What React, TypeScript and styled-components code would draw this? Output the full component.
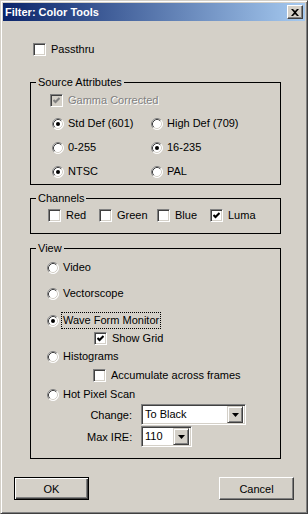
import React from 'react';
import styled, { createGlobalStyle } from 'styled-components';

const GlobalStyle = createGlobalStyle`
  html, body {
    margin: 0;
    padding: 0;
  }
  body {
    background: #d4d0c8;
    font-family: "Liberation Sans", Arial, sans-serif;
    font-size: 11px;
    color: #000;
  }
  * {
    box-sizing: border-box;
  }
`;

type Kind = 'radio' | 'check';

const Window = styled.div`
  width: 308px;
  height: 514px;
  display: flex;
  flex-direction: column;
  background: #d4d0c8;
  border: 1px solid;
  border-color: #d4d0c8 #404040 #404040 #d4d0c8;
  box-shadow: inset 1px 1px 0 #fff, inset -1px -1px 0 #808080;
  padding: 2px;
`;

const TitleBar = styled.div`
  height: 18px;
  flex: none;
  display: flex;
  align-items: center;
  justify-content: space-between;
  padding: 0 2px 0 2px;
  background: linear-gradient(to right, #0a246a, #a6caf0);
`;

const Title = styled.span`
  color: #fff;
  font-weight: bold;
  font-size: 11px;
  white-space: nowrap;
`;

const CloseButton = styled.div`
  width: 16px;
  height: 14px;
  display: flex;
  align-items: center;
  justify-content: center;
  background: #d4d0c8;
  border: 1px solid;
  border-color: #fff #404040 #404040 #fff;
  box-shadow: inset -1px -1px 0 #808080;
`;

const Body = styled.div`
  display: flex;
  flex-direction: column;
  padding: 22px 24px 0 27px;
`;

const OptionRow = styled.label<{ $kind: Kind; $indent?: number; $top?: number }>`
  display: flex;
  align-items: center;
  height: 13px;
  gap: ${p => (p.$kind === 'radio' ? 4 : 5)}px;
  margin-left: ${p => p.$indent ?? 0}px;
  margin-top: ${p => p.$top ?? 0}px;
`;

const OptionText = styled.span<{ $disabled?: boolean; $focused?: boolean }>`
  line-height: 13px;
  white-space: nowrap;
  color: ${p => (p.$disabled ? '#808080' : '#000')};
  text-shadow: ${p => (p.$disabled ? '1px 1px 0 #fff' : 'none')};
  outline: ${p => (p.$focused ? '1px dotted #000' : 'none')};
  outline-offset: 1px;
`;

const CheckBox = styled.span<{ $disabled?: boolean }>`
  width: 13px;
  height: 13px;
  flex: none;
  display: flex;
  align-items: center;
  justify-content: center;
  background: ${p => (p.$disabled ? '#d4d0c8' : '#fff')};
  border: 1px solid;
  border-color: #808080 #fff #fff #808080;
  box-shadow: inset 1px 1px 0 #404040, inset -1px -1px 0 #d4d0c8;
`;

const GroupBox = styled.fieldset<{ $top: number }>`
  margin: ${p => p.$top}px 0 0 0;
  padding: 0;
  min-width: 0;
  border: 1px solid #000;
`;

const Legend = styled.legend`
  margin-left: 5px;
  padding: 0 2px;
  line-height: 13px;
  font-size: 11px;
`;

const GroupContent = styled.div<{ $pad: string }>`
  display: flex;
  flex-direction: column;
  padding: ${p => p.$pad};
`;

const RadioGrid = styled.div`
  display: grid;
  grid-template-columns: 99px auto;
  row-gap: 11px;
  margin: 10px 0 0 2px;
`;

const ChannelGrid = styled.div`
  display: grid;
  grid-template-columns: 51px 58px 53px auto;
`;

const FieldGrid = styled.div`
  display: grid;
  grid-template-columns: 45px auto;
  column-gap: 9px;
  row-gap: 1px;
  align-items: center;
  margin: 3px 0 0 40px;
`;

const FieldLabel = styled.span`
  text-align: right;
  white-space: nowrap;
`;

const Combo = styled.div<{ $width: number }>`
  width: ${p => p.$width}px;
  height: 21px;
  display: flex;
  align-items: center;
  background: #fff;
  border: 1px solid;
  border-color: #808080 #fff #fff #808080;
  box-shadow: inset 1px 1px 0 #404040, inset -1px -1px 0 #d4d0c8;
  padding: 2px 2px 2px 3px;
`;

const ComboText = styled.span`
  flex: 1;
  line-height: 17px;
  white-space: nowrap;
`;

const ComboButton = styled.span`
  width: 16px;
  height: 17px;
  flex: none;
  display: flex;
  align-items: center;
  justify-content: center;
  background: #d4d0c8;
  border: 1px solid;
  border-color: #d4d0c8 #404040 #404040 #d4d0c8;
  box-shadow: inset 1px 1px 0 #fff, inset -1px -1px 0 #808080;
`;

const ButtonRow = styled.div`
  display: flex;
  justify-content: space-between;
  margin-top: 18px;
  padding: 0 11px;
`;

const Button = styled.button<{ $default?: boolean }>`
  width: 75px;
  height: 23px;
  padding: 0;
  font-family: "Liberation Sans", Arial, sans-serif;
  font-size: 11px;
  color: #000;
  background: #d4d0c8;
  border: 1px solid;
  border-color: ${p => (p.$default ? '#000' : '#fff #404040 #404040 #fff')};
  box-shadow: ${p =>
    p.$default
      ? 'inset 1px 1px 0 #fff, inset -1px -1px 0 #404040, inset -2px -2px 0 #808080'
      : 'inset -1px -1px 0 #808080'};
`;

const RadioMark = ({ checked }: { checked?: boolean }) => (
  <svg width="12" height="12" viewBox="0 0 12 12" style={{ flex: 'none' }}>
    <circle cx="6" cy="6" r="5.5" fill="#fff" />
    <path d="M2.11 9.89 A5.5 5.5 0 0 1 9.89 2.11" fill="none" stroke="#808080" />
    <path d="M9.89 2.11 A5.5 5.5 0 0 1 2.11 9.89" fill="none" stroke="#fff" />
    <path d="M2.82 9.18 A4.5 4.5 0 0 1 9.18 2.82" fill="none" stroke="#404040" />
    <path d="M9.18 2.82 A4.5 4.5 0 0 1 2.82 9.18" fill="none" stroke="#d4d0c8" />
    {checked && <circle cx="6" cy="6" r="2" fill="#000" />}
  </svg>
);

const CheckMark = ({ checked, disabled }: { checked?: boolean; disabled?: boolean }) => (
  <CheckBox $disabled={disabled}>
    {checked && (
      <svg width="7" height="7" viewBox="0 0 7 7">
        <polyline
          points="0.5,3 2.5,5 6.5,1"
          fill="none"
          stroke={disabled ? '#808080' : '#000'}
          strokeWidth="2"
        />
      </svg>
    )}
  </CheckBox>
);

type OptionProps = {
  kind: Kind;
  checked?: boolean;
  disabled?: boolean;
  focused?: boolean;
  indent?: number;
  top?: number;
  children: React.ReactNode;
};

const Option = ({ kind, checked, disabled, focused, indent, top, children }: OptionProps) => (
  <OptionRow $kind={kind} $indent={indent} $top={top}>
    {kind === 'radio' ? <RadioMark checked={checked} /> : <CheckMark checked={checked} disabled={disabled} />}
    <OptionText $disabled={disabled} $focused={focused}>
      {children}
    </OptionText>
  </OptionRow>
);

const Arrow = () => (
  <svg width="7" height="4" viewBox="0 0 7 4">
    <polygon points="0,0 7,0 3.5,4" fill="#000" />
  </svg>
);

export default function App() {
  return (
    <>
      <GlobalStyle />
      <Window>
        <TitleBar>
          <Title>Filter: Color Tools</Title>
          <CloseButton>
            <svg width="8" height="7" viewBox="0 0 8 7">
              <path d="M0 0 H2 L4 2 L6 0 H8 L5 3.5 L8 7 H6 L4 5 L2 7 H0 L3 3.5 Z" fill="#000" />
            </svg>
          </CloseButton>
        </TitleBar>
        <Body>
          <Option kind="check" indent={3}>Passthru</Option>

          <GroupBox $top={20}>
            <Legend>Source Attributes</Legend>
            <GroupContent $pad="5px 0 6px 19px">
              <Option kind="check" checked disabled>Gamma Corrected</Option>
              <RadioGrid>
                <Option kind="radio" checked>Std Def (601)</Option>
                <Option kind="radio">High Def (709)</Option>
                <Option kind="radio">0-255</Option>
                <Option kind="radio" checked>16-235</Option>
                <Option kind="radio" checked>NTSC</Option>
                <Option kind="radio">PAL</Option>
              </RadioGrid>
            </GroupContent>
          </GroupBox>

          <GroupBox $top={7}>
            <Legend>Channels</Legend>
            <GroupContent $pad="4px 0 11px 17px">
              <ChannelGrid>
                <Option kind="check">Red</Option>
                <Option kind="check">Green</Option>
                <Option kind="check">Blue</Option>
                <Option kind="check" checked>Luma</Option>
              </ChannelGrid>
            </GroupContent>
          </GroupBox>

          <GroupBox $top={8}>
            <Legend>View</Legend>
            <GroupContent $pad="6px 0 11px 16px">
              <Option kind="radio">Video</Option>
              <Option kind="radio" top={13}>Vectorscope</Option>
              <Option kind="radio" checked focused top={14}>Wave Form Monitor</Option>
              <Option kind="check" checked indent={47} top={5}>Show Grid</Option>
              <Option kind="radio" top={5}>Histograms</Option>
              <Option kind="check" indent={46} top={6}>Accumulate across frames</Option>
              <Option kind="radio" top={6}>Hot Pixel Scan</Option>
              <FieldGrid>
                <FieldLabel>Change:</FieldLabel>
                <Combo $width={105}>
                  <ComboText>To Black</ComboText>
                  <ComboButton><Arrow /></ComboButton>
                </Combo>
                <FieldLabel>Max IRE:</FieldLabel>
                <Combo $width={51}>
                  <ComboText>110</ComboText>
                  <ComboButton><Arrow /></ComboButton>
                </Combo>
              </FieldGrid>
            </GroupContent>
          </GroupBox>
        </Body>
        <ButtonRow>
          <Button $default>OK</Button>
          <Button>Cancel</Button>
        </ButtonRow>
      </Window>
    </>
  );
}
